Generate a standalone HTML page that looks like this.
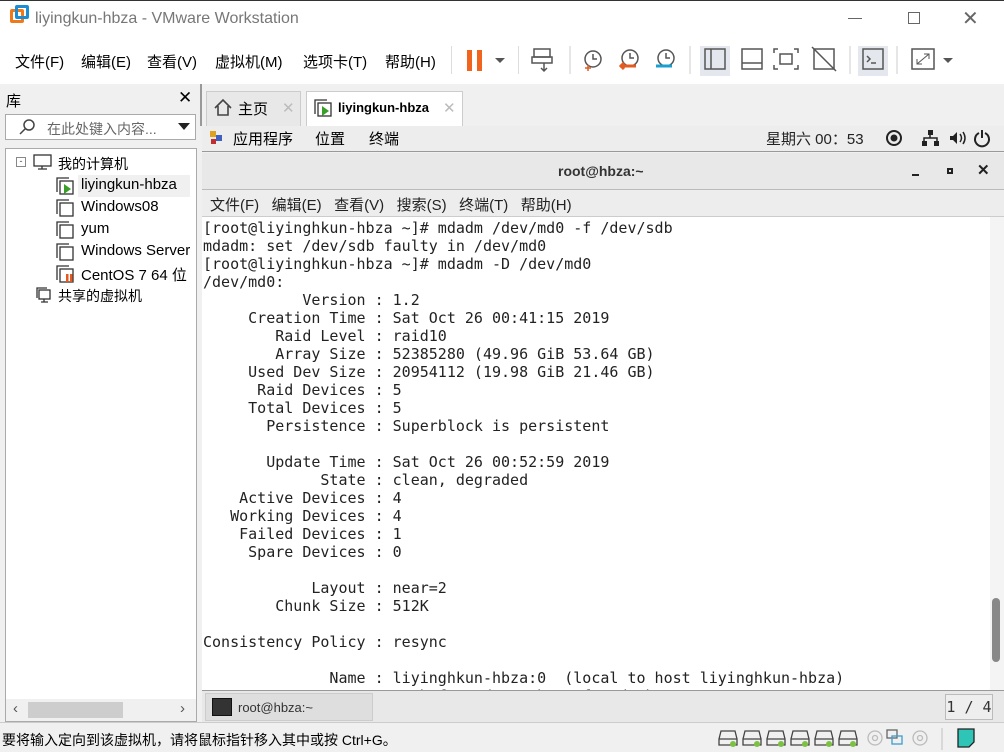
<!DOCTYPE html>
<html><head><meta charset="utf-8"><style>
*{margin:0;padding:0;box-sizing:border-box}
body{width:1004px;height:752px;overflow:hidden;background:#f0f0f0;font-family:"Liberation Sans","Noto Sans CJK SC",sans-serif;font-size:14px;color:#000;position:relative}
.a{position:absolute}
.mono{font-family:"DejaVu Sans Mono","Liberation Mono",monospace}
</style></head><body>
<!-- title bar -->
<div class="a" style="left:0;top:0;width:1004px;height:38px;background:#fff;border-top:1px solid #333"></div>
<div class="a" style="left:10px;top:9px;width:14px;height:14px;border:3px solid #f07a1a;border-radius:2px"></div>
<div class="a" style="left:15px;top:5px;width:14px;height:14px;border:3px solid #1b8ed3;border-radius:2px"></div>
<div class="a" style="left:35px;top:10px;font-size:16px;color:#777">liyingkun-hbza - VMware Workstation</div>
<div class="a" style="left:848px;top:18px;width:14px;height:1px;background:#666"></div>
<div class="a" style="left:908px;top:12px;width:12px;height:12px;border:1px solid #666"></div>
<div class="a" style="left:962px;top:6px;font-size:20px;color:#666">✕</div>
<!-- menu -->
<div class="a" style="left:0;top:38px;width:1004px;height:46px;background:#fff"></div>
<div class="a" style="left:15px;top:51px;font-size:15px">文件(F)</div>
<div class="a" style="left:81px;top:51px;font-size:15px">编辑(E)</div>
<div class="a" style="left:147px;top:51px;font-size:15px">查看(V)</div>
<div class="a" style="left:215px;top:51px;font-size:15px">虚拟机(M)</div>
<div class="a" style="left:303px;top:51px;font-size:15px">选项卡(T)</div>
<div class="a" style="left:385px;top:51px;font-size:15px">帮助(H)</div>
<div class="a" style="left:451px;top:46px;width:1px;height:28px;background:#ddd"></div>
<div class="a" style="left:467px;top:50px;width:5px;height:21px;background:#f0641e"></div>
<div class="a" style="left:477px;top:50px;width:5px;height:21px;background:#f0641e"></div>
<div class="a" style="left:495px;top:58px;border:5px solid transparent;border-top:5px solid #555"></div>
<div class="a" style="left:518px;top:46px;width:1px;height:28px;background:#ddd"></div>
<svg class="a" style="left:530px;top:46px" width="470" height="30" fill="none" stroke="#555" stroke-width="1.5">
<rect x="4" y="3" width="16" height="8"/><rect x="2" y="11" width="20" height="6"/><path d="M14 17v8M11 22l3 3 3-3"/>
<line x1="40" y1="0" x2="40" y2="28" stroke="#ddd"/>
<circle cx="63" cy="13" r="8"/><path d="M63 8v5h4"/><path d="M55 22h6M58 19v6" stroke="#e35b20"/>
<circle cx="100" cy="12" r="8"/><path d="M100 7v5h4"/><path d="M90 20h16M94 17l-3 3 3 3" stroke="#e35b20" stroke-width="3"/>
<circle cx="136" cy="12" r="8"/><path d="M136 7v5h4"/><path d="M126 20h16" stroke="#1a9fd0" stroke-width="3"/>
<line x1="160" y1="0" x2="160" y2="28" stroke="#ddd"/>
<rect x="170" y="-2" width="30" height="32" fill="#e4e8ee" stroke="none"/>
<rect x="175" y="3" width="20" height="20"/><line x1="181" y1="3" x2="181" y2="23"/>
<rect x="212" y="3" width="20" height="20"/><line x1="212" y1="17" x2="232" y2="17"/>
<path d="M248 3h-4v4M248 23h-4v-4M264 3h4v4M264 23h4v-4"/><rect x="250" y="8" width="12" height="10"/>
<rect x="284" y="3" width="20" height="20"/><line x1="282" y1="1" x2="306" y2="25"/>
<line x1="320" y1="0" x2="320" y2="28" stroke="#ddd"/>
<rect x="328" y="-2" width="30" height="32" fill="#e4e8ee" stroke="none"/>
<rect x="333" y="3" width="20" height="20"/><path d="M337 10l3 3-3 3M341 17h5"/>
<line x1="367" y1="0" x2="367" y2="28" stroke="#ddd"/>
<rect x="382" y="3" width="22" height="20"/><path d="M387 18l12-10M387 13v5h5M399 13v-5h-5" stroke-width="1"/>
<path d="M413 12h10l-5 5z" fill="#555" stroke="none"/>
</svg>
<!-- left panel -->
<div class="a" style="left:0;top:84px;width:200px;height:638px;background:#f0f0f0"></div>
<div class="a" style="left:6px;top:90px;font-size:15px">库</div>
<div class="a" style="left:178px;top:88px;font-size:17px">✕</div>
<div class="a" style="left:5px;top:114px;width:191px;height:26px;background:#fff;border:1px solid #aaa"></div>
<svg class="a" style="left:18px;top:118px" width="20" height="18" fill="none" stroke="#444" stroke-width="1.5"><circle cx="11" cy="7" r="5"/><line x1="7" y1="11" x2="2" y2="16"/></svg>
<div class="a" style="left:47px;top:119px;font-size:14px;color:#666">在此处键入内容...</div>
<div class="a" style="left:178px;top:123px;border:6px solid transparent;border-top:7px solid #222"></div>
<div class="a" style="left:5px;top:148px;width:192px;height:574px;background:#fff;border:1px solid #aaa"></div>
<div class="a" style="left:16px;top:157px;width:10px;height:10px;border:1px solid #888;font-size:9px;line-height:7px;text-align:center;color:#444">-</div>
<svg class="a" style="left:33px;top:154px" width="20" height="18" fill="none" stroke="#333" stroke-width="1.3"><rect x="1" y="1" width="17" height="11"/><path d="M9 12v3M5 15h9"/></svg>
<div class="a" style="left:58px;top:154px;font-size:14px">我的计算机</div>
<div class="a" style="left:78px;top:175px;width:112px;height:22px;background:#f0f0f0"></div>
<svg class="a" style="left:55px;top:176px" width="22" height="120" fill="#fff" stroke="#333" stroke-width="1.3">
<path d="M2 16V2h12"/><rect x="5" y="5" width="13" height="13"/><path d="M9 8l7 5-7 5z" fill="#3a9e2a" stroke="none"/>
<g transform="translate(0,22)"><path d="M2 16V2h12"/><rect x="5" y="5" width="13" height="13"/></g>
<g transform="translate(0,44)"><path d="M2 16V2h12"/><rect x="5" y="5" width="13" height="13"/></g>
<g transform="translate(0,66)"><path d="M2 16V2h12"/><rect x="5" y="5" width="13" height="13"/></g>
<g transform="translate(0,88)"><path d="M2 16V2h12"/><rect x="5" y="5" width="13" height="13"/><rect x="11" y="10" width="2.5" height="8" fill="#e35b20" stroke="none"/><rect x="15" y="10" width="2.5" height="8" fill="#e35b20" stroke="none"/></g>
</svg>
<div class="a" style="left:81px;top:176px;font-size:15px">liyingkun-hbza</div>
<div class="a" style="left:81px;top:198px;font-size:15px">Windows08</div>
<div class="a" style="left:81px;top:220px;font-size:15px">yum</div>
<div class="a" style="left:81px;top:242px;font-size:15px;width:114px;overflow:hidden;white-space:nowrap">Windows Server</div>
<div class="a" style="left:81px;top:264px;font-size:15px">CentOS 7 64 位</div>
<svg class="a" style="left:35px;top:286px" width="18" height="18" fill="#fff" stroke="#333" stroke-width="1.3"><path d="M2 12V2h10"/><rect x="4" y="4" width="11" height="9"/><path d="M9 13v3M6 16h7"/></svg>
<div class="a" style="left:58px;top:286px;font-size:14px">共享的虚拟机</div>
<div class="a" style="left:6px;top:699px;width:190px;height:22px;background:#f0f0f0"></div>
<div class="a" style="left:28px;top:702px;width:95px;height:16px;background:#cdcdcd"></div>
<div class="a" style="left:13px;top:700px;font-size:15px;color:#555">‹</div>
<div class="a" style="left:180px;top:700px;font-size:15px;color:#555">›</div>
<!-- tabs -->
<div class="a" style="left:200px;top:84px;width:804px;height:42px;background:#f0f0f0;border-left:2px solid #999"></div>
<div class="a" style="left:206px;top:91px;width:95px;height:35px;background:#e8e8e8;border:1px solid #ccc;border-bottom:none"></div>
<svg class="a" style="left:213px;top:98px" width="20" height="20" fill="none" stroke="#444" stroke-width="1.6"><path d="M2 10L10 2l8 8M5 8v9h10V8"/></svg>
<div class="a" style="left:238px;top:98px;font-size:15px">主页</div>
<div class="a" style="left:282px;top:99px;font-size:15px;color:#bbb">✕</div>
<div class="a" style="left:306px;top:91px;width:157px;height:35px;background:#fff;border:1px solid #ccc;border-bottom:none"></div>
<svg class="a" style="left:313px;top:98px" width="22" height="20" fill="#fff" stroke="#333" stroke-width="1.3"><path d="M2 16V2h12"/><rect x="5" y="5" width="13" height="13"/><path d="M9 8l7 5-7 5z" fill="#3a9e2a" stroke="none"/></svg>
<div class="a" style="left:338px;top:100px;font-size:13px;font-weight:bold">liyingkun-hbza</div>
<div class="a" style="left:443px;top:99px;font-size:15px;color:#bbb">✕</div>
<!-- guest top bar -->
<div class="a" style="left:202px;top:126px;width:802px;height:26px;background:#ededed;border-bottom:1px solid #999"></div>
<div class="a" style="left:210px;top:131px;width:6px;height:6px;background:#e0a020"></div>
<div class="a" style="left:216px;top:135px;width:6px;height:6px;background:#4060c0"></div>
<div class="a" style="left:211px;top:139px;width:5px;height:5px;background:#c03030"></div>
<div class="a" style="left:233px;top:128px;font-size:15px">应用程序</div>
<div class="a" style="left:315px;top:128px;font-size:15px">位置</div>
<div class="a" style="left:369px;top:128px;font-size:15px">终端</div>
<div class="a" style="left:766px;top:128px;font-size:15px;color:#222">星期六 00：53</div>
<svg class="a" style="left:884px;top:128px" width="110" height="20" fill="#222">
<circle cx="10" cy="10" r="7" fill="none" stroke="#222" stroke-width="2"/><circle cx="10" cy="10" r="3.5"/>
<rect x="44" y="2" width="5" height="5"/><rect x="38" y="13" width="5" height="5"/><rect x="50" y="13" width="5" height="5"/><path d="M46 7v3M40 13v-3h13v3" stroke="#222" fill="none" stroke-width="1.5"/>
<path d="M66 8h3l4-4v12l-4-4h-3z"/><path d="M76 6q3 4 0 8M79 4q4 6 0 12" stroke="#222" fill="none" stroke-width="1.5"/>
<path d="M95 5a7 7 0 1 0 6 0M98 2v8" stroke="#222" fill="none" stroke-width="2"/>
</svg>
<!-- terminal title -->
<div class="a" style="left:202px;top:153px;width:802px;height:37px;background:#e8e8e8;border-bottom:1px solid #bbb"></div>
<div class="a" style="left:558px;top:163px;font-size:14px;font-weight:bold;color:#333">root@hbza:~</div>
<div class="a" style="left:912px;top:174px;width:7px;height:2px;background:#222"></div>
<div class="a" style="left:947px;top:168px;width:6px;height:6px;border:2px solid #222"></div>
<div class="a" style="left:977px;top:161px;font-size:15px;font-weight:bold;color:#222">✕</div>
<!-- terminal menu -->
<div class="a" style="left:202px;top:190px;width:802px;height:27px;background:#ededed;border-bottom:1px solid #ccc"></div>
<div class="a" style="left:210px;top:194px;font-size:15px;color:#222;white-space:pre">文件(F)   编辑(E)   查看(V)   搜索(S)   终端(T)   帮助(H)</div>
<!-- terminal text -->
<div class="a" style="left:202px;top:217px;width:802px;height:473px;background:#fff;overflow:hidden">
<pre class="mono" style="position:absolute;left:1px;top:2px;font-size:15px;line-height:18px;color:#222">[root@liyinghkun-hbza ~]# mdadm /dev/md0 -f /dev/sdb
mdadm: set /dev/sdb faulty in /dev/md0
[root@liyinghkun-hbza ~]# mdadm -D /dev/md0
/dev/md0:
           Version : 1.2
     Creation Time : Sat Oct 26 00:41:15 2019
        Raid Level : raid10
        Array Size : 52385280 (49.96 GiB 53.64 GB)
     Used Dev Size : 20954112 (19.98 GiB 21.46 GB)
      Raid Devices : 5
     Total Devices : 5
       Persistence : Superblock is persistent

       Update Time : Sat Oct 26 00:52:59 2019
             State : clean, degraded
    Active Devices : 4
   Working Devices : 4
    Failed Devices : 1
     Spare Devices : 0

            Layout : near=2
        Chunk Size : 512K

Consistency Policy : resync

              Name : liyinghkun-hbza:0  (local to host liyinghkun-hbza)
              UUID : 3c0b8f2a:1d9e4c7b:8a2f6e1d:5b7c9a04</pre>
</div>
<div class="a" style="left:990px;top:217px;width:14px;height:473px;background:#f4f4f4"></div>
<div class="a" style="left:992px;top:598px;width:8px;height:64px;background:#888;border-radius:4px"></div>
<!-- guest taskbar -->
<div class="a" style="left:202px;top:690px;width:802px;height:32px;background:#e8e8e8;border-top:1px solid #999"></div>
<div class="a" style="left:205px;top:693px;width:168px;height:28px;background:#dedede;border:1px solid #ccc"></div>
<div class="a" style="left:212px;top:698px;width:20px;height:18px;background:#333;border:1px solid #111"></div>
<div class="a" style="left:238px;top:700px;font-size:13px;color:#333">root@hbza:~</div>
<div class="a mono" style="left:945px;top:694px;width:48px;height:26px;background:#eee;border:1px solid #bbb;font-size:15px;text-align:center;line-height:24px;color:#333">1 / 4</div>
<!-- status bar -->
<div class="a" style="left:0;top:722px;width:1004px;height:30px;background:#f0f0f0;border-top:1px solid #ccc"></div>
<div class="a" style="left:2px;top:730px;font-size:14px">要将输入定向到该虚拟机，请将鼠标指针移入其中或按 Ctrl+G。</div>
<svg class="a" style="left:716px;top:726px" width="288" height="26" fill="none" stroke="#444" stroke-width="1.3">
<g id="d"><path d="M5 5h14l2 8v6H3v-6z"/><line x1="3" y1="13" x2="21" y2="13"/><circle cx="17" cy="18" r="3" fill="#7cc242" stroke="none"/></g>
<use href="#d" x="24"/><use href="#d" x="48"/><use href="#d" x="72"/><use href="#d" x="96"/><use href="#d" x="120"/>
<circle cx="159" cy="12" r="7" stroke="#bbb"/><circle cx="159" cy="12" r="2.5" stroke="#bbb"/>
<rect x="171" y="4" width="10" height="8" stroke="#666"/><rect x="176" y="10" width="10" height="8" stroke="#3a9ed0"/>
<circle cx="204" cy="12" r="7" stroke="#bbb"/><circle cx="204" cy="12" r="2.5" stroke="#bbb"/>
<line x1="226" y1="2" x2="226" y2="24" stroke="#ccc"/>
<path d="M242 3h16v13l-5 5h-11z" fill="#2ec4b6" stroke="#222"/>
</svg>
</body></html>
